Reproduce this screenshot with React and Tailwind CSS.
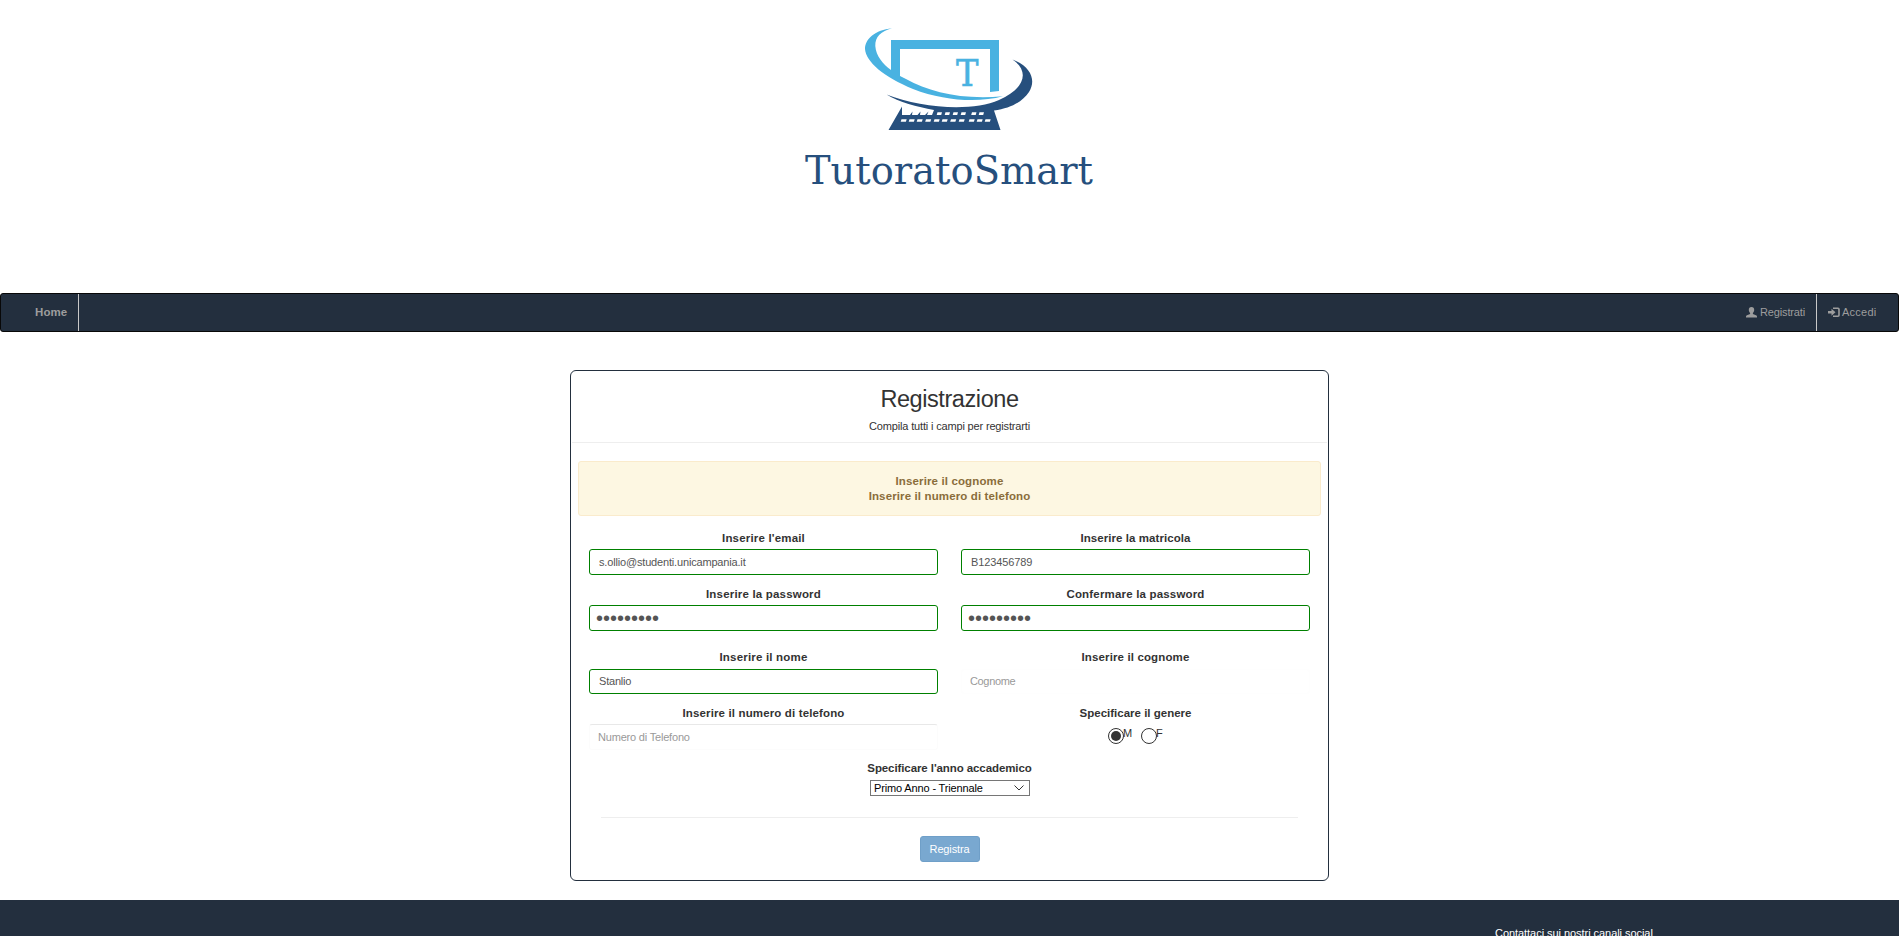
import React from 'react';

const KEYS_TOP = [157.5, 165.5, 173.5, 181.5, 192, 199.5];
const KEYS_BOTTOM = [120.5, 128.5, 136.5, 145, 153.5, 161.5, 170, 178.5, 188.5, 196.5, 204.5];

function Logo() {
  return (
    <svg width="340" height="200" viewBox="0 0 340 200">
      <path fill="#49b2e1" d="M111 30H219V81L210 82V39H120V66L126 69C150 82 181 90 223 86.3C198 93 164 91 133 79C104 67 86 52 85 39C85 29 95 20 112 18.3C101 21 95 27 95.300 36C96 46 103 54 111 60Z" />
      <path fill="#264f7d" d="M106.500 84.500C140 98 192 102 219 90C245 79 250 61 232.500 49.500C252 57 256 71 249 82C243 91 232 98 214 100.500L220.500 120H108.500L120 100L122 96.500V105H130L132.500 101.500L132 105H137.500L140.500 101.500L140 105H145L148.500 101.500L147 105H152L154 100C137 97 119 92 106.500 84.500Z" />
      <g fill="#ffffff">
        {KEYS_TOP.map((x) => (
          <path key={x} d={`M${x} 102.300h4.500l-.8 2.700h-4.500z`} />
        ))}
        {KEYS_BOTTOM.map((x) => (
          <path key={x} d={`M${x + 1} 109.300h5.200l-.8 2.400h-5.200z`} />
        ))}
      </g>
      <text x="176" y="75.500" textLength="22.500" lengthAdjust="spacingAndGlyphs" fontSize="37" fill="#49b2e1" stroke="#49b2e1" strokeWidth=".5" className="font-['DejaVu_Serif_Condensed','DejaVu_Serif',serif]">T</text>
      <text x="25" y="173.500" textLength="288" lengthAdjust="spacingAndGlyphs" fontSize="39.500" fill="#264f7d" className="font-['DejaVu_Serif_Condensed','DejaVu_Serif',serif]">TutoratoSmart</text>
    </svg>
  );
}

function UserIcon() {
  return (
    <svg width="11" height="11" viewBox="0 0 11 11" fill="currentColor">
      <path d="M5.500 0C7.300 0 8.300 1.200 8.200 3C8.100 4.400 7.500 5.300 6.900 5.900V7L10 8.300Q11 8.800 11 9.500V10.500H0V9.500Q0 8.800 1 8.300L4.100 7V5.900C3.500 5.300 2.900 4.400 2.800 3C2.700 1.200 3.700 0 5.500 0Z" />
    </svg>
  );
}

function LoginIcon() {
  return (
    <svg width="12" height="11" viewBox="0 0 12 11" fill="currentColor">
      <path d="M0 4H3.500V1.800L7.500 5.300L3.500 8.800V6.600H0Z" />
      <path d="M5 .5H10Q11.800 .5 11.800 2.300V8.300Q11.800 10.100 10 10.100H5V8.500H9.600Q10.200 8.500 10.200 7.900V2.700Q10.200 2.100 9.600 2.100H5Z" />
    </svg>
  );
}

function Label({ className = '', children }) {
  return <label className={`block text-center text-[11.5px] font-bold leading-[15px] ${className}`}>{children}</label>;
}

function Field({ className = '', ...props }) {
  return (
    <input
      className={`block w-full rounded-[3px] border bg-white text-[#555] outline-none placeholder:text-[#999] placeholder:opacity-100 ${className}`}
      {...props}
    />
  );
}

function Radio({ checked }) {
  return (
    <span className="flex size-4 items-center justify-center rounded-full border border-[#333]">
      {checked && <span className="size-[10px] rounded-full bg-[#333]" />}
    </span>
  );
}

export default function App() {
  return (
    <div className="h-[936px] overflow-hidden bg-white font-['Liberation_Sans',Arial,sans-serif] text-[11px] leading-[15px] text-[#333]">
      <header className="flex h-[293px] justify-center pt-[10px] pr-px pl-0.5">
        <Logo />
      </header>

      <nav className="flex h-[39px] justify-between rounded-[3px] border border-[#080808] bg-[#232f3e] text-[#9d9d9d]">
        <a className="flex w-[78px] items-center border-r border-[#c8c8c8] pl-[34px] text-[11.5px] font-bold tracking-[0.1px]">Home</a>
        <div className="flex">
          <a className="flex items-center gap-[3px] pr-[11px] tracking-[-0.15px]">
            <UserIcon />
            Registrati
          </a>
          <a className="flex w-[82px] items-center gap-[2px] border-l border-[#c8c8c8] pl-[11px] tracking-[0.25px]">
            <LoginIcon />
            Accedi
          </a>
        </div>
      </nav>

      <main className="mt-[38px] ml-[570px] h-[511px] w-[759px] rounded-md border border-[#232f3e] pt-[15px]">
        <h1 className="text-center text-[23.5px] leading-[26px] tracking-[-0.42px]">Registrazione</h1>
        <p className="mt-[7px] text-center tracking-[-0.16px]">Compila tutti i campi per registrarti</p>
        <hr className="mx-px mt-2 border-[#eee]" />

        <div className="mx-[7px] mt-[18px] h-[55px] rounded-[3px] border border-[#faebcc] bg-[#fdf7e2] pt-3 text-center text-[11.5px] font-bold leading-[15px] tracking-[0.13px] text-[#8a6d3b]">
          <p>Inserire il cognome</p>
          <p>Inserire il numero di telefono</p>
        </div>

        <form className="px-[18px] pt-[15px]">
          <div className="grid grid-cols-[349px_349px] gap-x-[23px]">
            <div>
              <Label className="tracking-[0.18px]">Inserire l'email</Label>
              <Field className="mt-[3px] h-[26px] border-[green] pl-[9px] tracking-[-0.17px]" defaultValue="s.ollio@studenti.unicampania.it" />
            </div>
            <div>
              <Label className="tracking-[0.06px]">Inserire la matricola</Label>
              <Field className="mt-[3px] h-[26px] border-[green] pl-[9px] tracking-[-0.12px]" defaultValue="B123456789" />
            </div>
            <div className="mt-3">
              <Label className="tracking-[0.19px]">Inserire la password</Label>
              <Field type="password" className="mt-[3px] h-[26px] border-[green] pt-px pl-[6px] text-[20px]" defaultValue="studente1" />
            </div>
            <div className="mt-3">
              <Label className="tracking-[0.18px]">Confermare la password</Label>
              <Field type="password" className="mt-[3px] h-[26px] border-[green] pt-px pl-[6px] text-[20px]" defaultValue="studente1" />
            </div>
            <div className="mt-[19px]">
              <Label className="tracking-[0.19px]">Inserire il nome</Label>
              <Field className="mt-1 h-[25px] border-[green] pb-px pl-[9px] tracking-[-0.2px]" defaultValue="Stanlio" />
            </div>
            <div className="mt-[19px]">
              <Label className="tracking-[0.13px]">Inserire il cognome</Label>
              <Field className="mt-1 h-[25px] border-[#fefefe] pb-px pl-2 tracking-[-0.35px]" placeholder="Cognome" />
            </div>
            <div className="mt-3">
              <Label className="tracking-[0.14px]">Inserire il numero di telefono</Label>
              <Field className="mt-[3px] h-[26px] border-[#fcfcfc] border-t-[#e8e8e8] pl-2 tracking-[-0.19px]" placeholder="Numero di Telefono" />
            </div>
            <div className="mt-3">
              <Label className="tracking-[0px]">Specificare il genere</Label>
              <div className="mt-[7px] flex h-4 pl-[147px]">
                <Radio checked />
                <span className="-mt-[2px] w-[17px] -indent-px">M</span>
                <Radio />
                <span className="-mt-[2px] -indent-px">F</span>
              </div>
            </div>
          </div>

          <Label className="mt-[11px] tracking-[-0.09px]">Specificare l'anno accademico</Label>
          <div className="mx-auto mt-1 flex h-4 w-[160px] items-center justify-between border border-[#767676] pr-[5px] pl-[3.5px] text-black">
            <span className="tracking-[-0.14px]">Primo Anno - Triennale</span>
            <svg width="10" height="6" viewBox="0 0 10 6" fill="none" stroke="#333" strokeWidth="1">
              <path d="M.5 .5L5 5L9.500 .5" />
            </svg>
          </div>
          <hr className="mx-3 mt-[21px] border-[#eee]" />
          <button type="button" className="mx-auto mt-[18px] block h-[26px] w-[60px] rounded-[3px] border border-[#6f9fc8] bg-[#79a8d0] tracking-[-0.15px] text-white">
            Registra
          </button>
        </form>
      </main>

      <footer className="mt-[19px] h-9 overflow-hidden bg-[#232f3e] pt-[26px] pl-[1495px] tracking-[-0.05px] text-white">
        <p className="whitespace-nowrap">Contattaci sui nostri canali social</p>
      </footer>
    </div>
  );
}
